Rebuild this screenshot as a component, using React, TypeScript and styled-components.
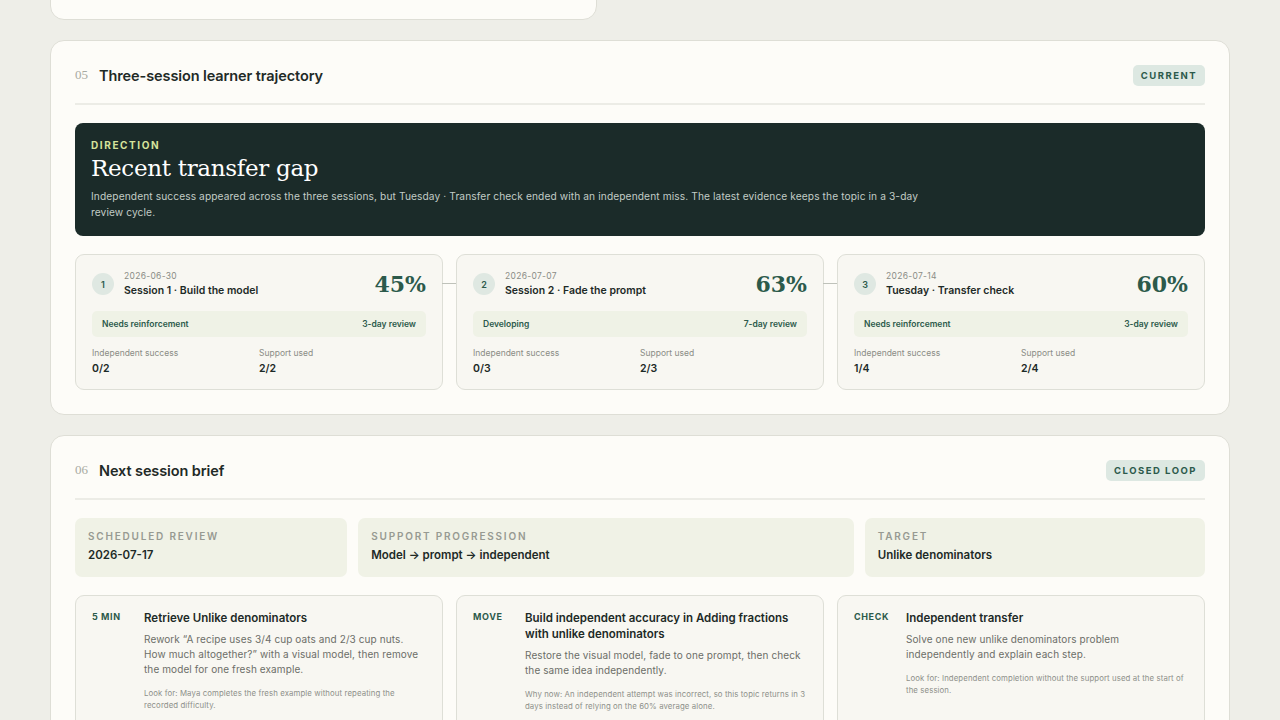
import React from "react";
import styled, { createGlobalStyle } from "styled-components";

const G = createGlobalStyle`
  body { margin: 0; background: #eeeee8; font-family: Inter, "Noto Sans", sans-serif; color: #1d2a27; }
`;
const Page = styled.div`padding: 0 50px 40px; display: flex; flex-direction: column; gap: 20px;`;
const TopStub = styled.div`
  width: 547px; height: 40px; margin-top: -20px; background: #fdfcf8;
  border: 1px solid #deded6; border-radius: 14px; box-sizing: border-box;
`;
const Card = styled.section`
  background: #fdfcf8; border: 1px solid #deded6; border-radius: 14px; padding: 0 24px 24px;
`;
const Head = styled.div`
  display: flex; align-items: center; height: 56px; padding-top: 6px; border-bottom: 2px solid #ecece6; margin-bottom: 18px;
`;
const Num = styled.span`font-family: "Liberation Serif", serif; font-size: 13px; color: #a8aaa2; width: 24px;`;
const Title = styled.h2`margin: 0; font-size: 14.5px; font-weight: 600; flex: 1; color: #1f2a27; letter-spacing: -0.1px;`;
const Pill = styled.span`
  background: #dde8e2; color: #2c5a4b; font-size: 9.5px; font-weight: 700; letter-spacing: 1.5px;
  padding: 5px 8px; border-radius: 5px;
`;
const Dark = styled.div`
  background: #1b2b29; border-radius: 8px; padding: 16px 16px 16px; color: #e8ece6;
`;
const Eyebrow = styled.div`font-size: 10px; font-weight: 700; letter-spacing: 1.6px; color: #d6e39b;`;
const Big = styled.div`font-family: "DejaVu Serif", "Liberation Serif", serif; font-size: 23px; margin: 4px 0 7px; color: #fff; letter-spacing: -0.3px;`;
const DarkText = styled.p`margin: 0; font-size: 10.2px; line-height: 16px; color: #c2ccc6; max-width: 860px; letter-spacing: 0.1px;`;
const Row3 = styled.div`display: grid; grid-template-columns: 1fr 1fr 1fr; gap: 13px; margin-top: 18px;`;
const SCard = styled.div`
  position: relative; border: 1px solid #dedfd7; border-radius: 9px; background: #f8f7f2; padding: 16px 16px 14px;
`;
const Conn = styled.span`position: absolute; right: -14px; top: 28px; width: 14px; height: 1px; background: #bfc2ba;`;
const STop = styled.div`display: flex; align-items: center; gap: 10px;`;
const Circ = styled.span`
  width: 22px; height: 22px; border-radius: 50%; background: #dfe8e2; color: #2c5a4b; font-size: 9px; font-weight: 600;
  display: flex; align-items: center; justify-content: center; flex: none;
`;
const SInfo = styled.div`flex: 1;`;
const Date = styled.div`font-size: 8.5px; color: #8b8d86; letter-spacing: 0.3px;`;
const SName = styled.div`font-size: 10.5px; font-weight: 600; margin-top: 3px;`;
const Pct = styled.div`font-family: "DejaVu Serif", "Liberation Serif", serif; font-size: 22px; font-weight: 700; color: #2c5a4b;`;
const Status = styled.div`
  display: flex; justify-content: space-between; background: #eff2e6; border-radius: 5px; padding: 8px 10px;
  font-size: 8.5px; font-weight: 600; color: #2c5a4b; margin: 14px 0 11px;
`;
const Stats = styled.div`display: grid; grid-template-columns: 1fr 1fr;`;
const SLabel = styled.div`font-size: 8.5px; color: #8b8d86;`;
const SVal = styled.div`font-size: 10.5px; font-weight: 600; margin-top: 4px;`;
const Summary = styled.div`display: grid; grid-template-columns: 272fr 495fr 340fr; gap: 11px;`;
const SumBox = styled.div`background: #f0f2e6; border-radius: 7px; padding: 12px 13px 15px;`;
const SumLabel = styled.div`font-size: 10px; font-weight: 600; letter-spacing: 1.8px; color: #979a92;`;
const SumVal = styled.div`font-size: 11.5px; font-weight: 600; margin-top: 6px;`;
const Step = styled.div`
  border: 1px solid #dedfd7; border-radius: 9px; background: #f8f7f2; padding: 14px 16px 16px;
  display: grid; grid-template-columns: 52px 1fr;
`;
const Tag = styled.div`font-size: 9px; font-weight: 700; letter-spacing: 0.6px; color: #2c5a4b; padding-top: 1px;`;
const StepT = styled.div`font-size: 11.5px; font-weight: 600; line-height: 16px;`;
const StepP = styled.p`margin: 6px 0 0; font-size: 10px; line-height: 15px; color: #6c6e68; letter-spacing: 0.1px;`;
const Small = styled.p`margin: 10px 0 0; font-size: 7.8px; line-height: 12px; color: #8e908a; letter-spacing: 0.1px;`;

const sessions = [
  { n: 1, d: "2026-06-30", t: "Session 1 · Build the model", p: "45%", s: "Needs reinforcement", r: "3-day review", i: "0/2", u: "2/2" },
  { n: 2, d: "2026-07-07", t: "Session 2 · Fade the prompt", p: "63%", s: "Developing", r: "7-day review", i: "0/3", u: "2/3" },
  { n: 3, d: "2026-07-14", t: "Tuesday · Transfer check", p: "60%", s: "Needs reinforcement", r: "3-day review", i: "1/4", u: "2/4" },
];
const steps = [
  { tag: "5 MIN", t: "Retrieve Unlike denominators", p: "Rework “A recipe uses 3/4 cup oats and 2/3 cup nuts. How much altogether?” with a visual model, then remove the model for one fresh example.", s: "Look for: Maya completes the fresh example without repeating the recorded difficulty." },
  { tag: "MOVE", t: "Build independent accuracy in Adding fractions with unlike denominators", p: "Restore the visual model, fade to one prompt, then check the same idea independently.", s: "Why now: An independent attempt was incorrect, so this topic returns in 3 days instead of relying on the 60% average alone." },
  { tag: "CHECK", t: "Independent transfer", p: "Solve one new unlike denominators problem independently and explain each step.", s: "Look for: Independent completion without the support used at the start of the session." },
];

export default function App() {
  return (
    <>
      <G />
      <Page>
        <TopStub />
        <Card>
          <Head><Num>05</Num><Title>Three-session learner trajectory</Title><Pill>CURRENT</Pill></Head>
          <Dark>
            <Eyebrow>DIRECTION</Eyebrow>
            <Big>Recent transfer gap</Big>
            <DarkText>Independent success appeared across the three sessions, but Tuesday · Transfer check ended with an independent miss. The latest evidence keeps the topic in a 3-day review cycle.</DarkText>
          </Dark>
          <Row3>
            {sessions.map((s, k) => (
              <SCard key={s.n}>
                {k < 2 && <Conn />}
                <STop>
                  <Circ>{s.n}</Circ>
                  <SInfo><Date>{s.d}</Date><SName>{s.t}</SName></SInfo>
                  <Pct>{s.p}</Pct>
                </STop>
                <Status><span>{s.s}</span><span>{s.r}</span></Status>
                <Stats>
                  <div><SLabel>Independent success</SLabel><SVal>{s.i}</SVal></div>
                  <div><SLabel>Support used</SLabel><SVal>{s.u}</SVal></div>
                </Stats>
              </SCard>
            ))}
          </Row3>
        </Card>
        <Card>
          <Head><Num>06</Num><Title>Next session brief</Title><Pill>CLOSED LOOP</Pill></Head>
          <Summary>
            <SumBox><SumLabel>SCHEDULED REVIEW</SumLabel><SumVal>2026-07-17</SumVal></SumBox>
            <SumBox><SumLabel>SUPPORT PROGRESSION</SumLabel><SumVal>Model → prompt → independent</SumVal></SumBox>
            <SumBox><SumLabel>TARGET</SumLabel><SumVal>Unlike denominators</SumVal></SumBox>
          </Summary>
          <Row3>
            {steps.map((s) => (
              <Step key={s.tag}>
                <Tag>{s.tag}</Tag>
                <div><StepT>{s.t}</StepT><StepP>{s.p}</StepP><Small>{s.s}</Small></div>
              </Step>
            ))}
          </Row3>
        </Card>
      </Page>
    </>
  );
}
